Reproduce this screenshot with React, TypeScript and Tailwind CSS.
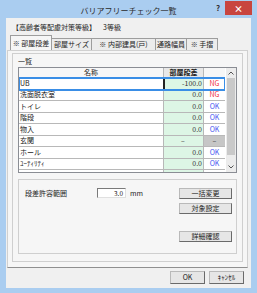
import React from 'react'

const font = { fontFamily: '"Noto Sans CJK JP", "Noto Sans", sans-serif' }

interface RowData {
    name: string,
    val: string,
    res: string,
}

const rows: RowData[] = [
    { name: 'UB', val: '-100.0', res: 'NG' },
    { name: '洗面脱衣室', val: '0.0', res: 'NG' },
    { name: 'トイレ', val: '0.0', res: 'OK' },
    { name: '階段', val: '0.0', res: 'OK' },
    { name: '物入', val: '0.0', res: 'OK' },
    { name: '玄関', val: '–', res: '–' },
    { name: 'ホール', val: '0.0', res: 'OK' },
    { name: 'ﾕｰﾃｨﾘﾃｨ', val: '0.0', res: 'OK' },
]

const tabs = [
    { label: '※ 部屋段差', w: 'w-[42px]', sel: true },
    { label: '部屋サイズ', w: 'w-[41px]', sel: false },
    { label: '※ 内部建具(戸)', w: 'w-[65px]', sel: false },
    { label: '通路幅員', w: 'w-[32px]', sel: false },
    { label: '※ 手摺', w: 'w-[32px]', sel: false },
]

const Btn: React.FC<{ label: string, cls?: string }> = ({ label, cls }) => (
    <div className={`flex items-center justify-center bg-[#e6e6e6] border border-[#b9b9b9] border-r-[#6a6a6a] border-b-[#6a6a6a] text-[7px] leading-none text-[#222] whitespace-nowrap ${cls ?? ''}`}>
        {label}
    </div>
)

const Row: React.FC<{ r: RowData, sel: boolean }> = ({ r, sel }) => {
    const dash = r.res === '–'
    return (
        <div className={`flex h-[11.5px] shrink-0 border-b border-[#b8b8b8] bg-white text-[7px] leading-none ${sel ? 'outline-2 outline-[#3a8ee6] -outline-offset-1 relative' : ''}`}>
            <div className="w-[144px] flex items-center pl-[1px] text-[#222]">{r.name}</div>
            <div className={`w-[40px] flex items-center bg-[#ddf6e5] pr-[1px] text-[#333] ${dash ? 'justify-center' : 'justify-end'} ${sel ? 'border-l-2 border-[#222]' : 'border-l border-[#b8b8b8]'}`}>{r.val}</div>
            <div className={`w-[22px] flex items-center justify-center border-l border-[#b8b8b8] ${dash ? 'bg-[#c6c6c6] text-[#333]' : r.res === 'NG' ? 'text-[#f0303a]' : 'text-[#4a58f0]'}`}>{r.res}</div>
        </div>
    )
}

const App: React.FC = () => {
    return (
        <div className="w-[257px] h-[293px] bg-[#aacdf0] flex flex-col overflow-hidden" style={font}>
            {/* title bar */}
            <div className="relative h-[18px] shrink-0 flex items-center justify-center pt-[3px]">
                <span className="text-[8px] leading-none text-[#2b2b2b]">バリアフリーチェック一覧</span>
                <span className="absolute right-[37px] top-[4px] text-[8px] font-bold leading-none text-[#333]">?</span>
                <div className="absolute right-[5px] top-[1px] w-[27px] h-[14px] bg-[#c8453f] flex items-center justify-center text-white text-[9px] font-bold leading-none">×</div>
            </div>

            {/* client */}
            <div className="flex-1 mx-[6px] mb-[5px] bg-[#f0f0f0] flex flex-col">
                <div className="h-[17px] shrink-0 pt-[4px] pl-[6px] flex text-[7px] leading-[10px] text-[#222]">
                    <span className="w-[91px]">【高齢者等配慮対策等級】</span>
                    <span>3等級</span>
                </div>

                {/* tabs */}
                <div className="h-[15px] shrink-0 flex items-end pl-[4px]">
                    {tabs.map(t => (
                        <div key={t.label} className={`${t.w} flex items-center justify-center border-t border-l border-r border-[#9d9d9d] text-[7px] leading-none text-[#222] whitespace-nowrap ${t.sel ? 'h-[15px] bg-[#f6f6f6] border-b-0' : 'h-[12px] bg-[#ececec] -ml-[1px]'}`}>
                            {t.label}
                        </div>
                    ))}
                </div>

                {/* tab page */}
                <div className="ml-[1px] w-[241px] h-[218px] shrink-0 border border-[#d0d0d0] border-b-[#8f8f8f] bg-[#f6f6f6] pt-[2px] px-[4px] pb-[5px] flex flex-col">
                    <div className="flex-1 border border-[#cfcfcf] flex flex-col px-[5px]">
                        <div className="h-[13px] shrink-0 pt-[2px] text-[7px] leading-[10px] text-[#222]">一覧</div>

                        {/* list */}
                        <div className="h-[106px] shrink-0 border border-[#8a8d94] flex bg-white">
                            <div className="w-[206px] flex flex-col overflow-hidden">
                                <div className="h-[10px] shrink-0 flex border-b border-[#a8a8a8] bg-[#f7f7f7] text-[7px] leading-none text-[#222]">
                                    <div className="w-[144px] flex items-center justify-center">名称</div>
                                    <div className="w-[40px] flex items-center justify-center border-l border-[#b8b8b8] font-bold bg-[#e8e8e8]">部屋段差</div>
                                    <div className="w-[22px] border-l border-[#b8b8b8]"></div>
                                </div>
                                {rows.map((r, i) => <Row key={r.name} r={r} sel={i === 0} />)}
                                <div className="flex h-[11.5px] shrink-0 bg-white">
                                    <div className="w-[144px]"></div>
                                    <div className="w-[40px] bg-[#ddf6e5] border-l border-[#b8b8b8]"></div>
                                    <div className="w-[22px] border-l border-[#b8b8b8]"></div>
                                </div>
                            </div>
                            <div className="w-[10px] ml-auto flex flex-col bg-[#ececec]">
                                <div className="h-[10px] flex items-center justify-center">
                                    <svg width="6" height="4" viewBox="0 0 6 4"><path d="M0.5 3.5 L3 1 L5.5 3.5" fill="none" stroke="#555" strokeWidth="1" /></svg>
                                </div>
                                <div className="h-[77px] mx-[1px] bg-[#c9c9c9]"></div>
                                <div className="flex-1"></div>
                                <div className="h-[10px] flex items-center justify-center">
                                    <svg width="6" height="4" viewBox="0 0 6 4"><path d="M0.5 0.5 L3 3 L5.5 0.5" fill="none" stroke="#555" strokeWidth="1" /></svg>
                                </div>
                            </div>
                        </div>

                        {/* lower settings */}
                        <div className="mt-[6px] h-[75px] shrink-0 border border-[#cfcfcf] flex pt-[8px] pl-[6px] pr-[4px]">
                            <div className="flex-1 flex items-start text-[7px] text-[#222]">
                                <span className="w-[72px] h-[11px] flex items-center leading-none">段差許容範囲</span>
                                <div className="w-[29px] h-[10px] bg-white border border-[#7a7a7a] border-r-[#e0e0e0] border-b-[#e0e0e0] flex items-center justify-end pr-[2px] leading-none text-[6.5px]">3.0</div>
                                <span className="ml-[4px] h-[11px] flex items-center leading-none">mm</span>
                            </div>
                            <div className="w-[53px] flex flex-col">
                                <Btn label="一括変更" cls="h-[11px]" />
                                <Btn label="対象設定" cls="h-[11px] mt-[4px]" />
                                <Btn label="詳細確認" cls="h-[11px] mt-[17px]" />
                            </div>
                        </div>
                    </div>
                </div>

                {/* footer buttons */}
                <div className="flex justify-end gap-[4px] mt-[3px] mr-[7px]">
                    <Btn label="OK" cls="w-[35px] h-[13px]" />
                    <Btn label="ｷｬﾝｾﾙ" cls="w-[35px] h-[13px]" />
                </div>
            </div>
        </div>
    )
}

export default App
